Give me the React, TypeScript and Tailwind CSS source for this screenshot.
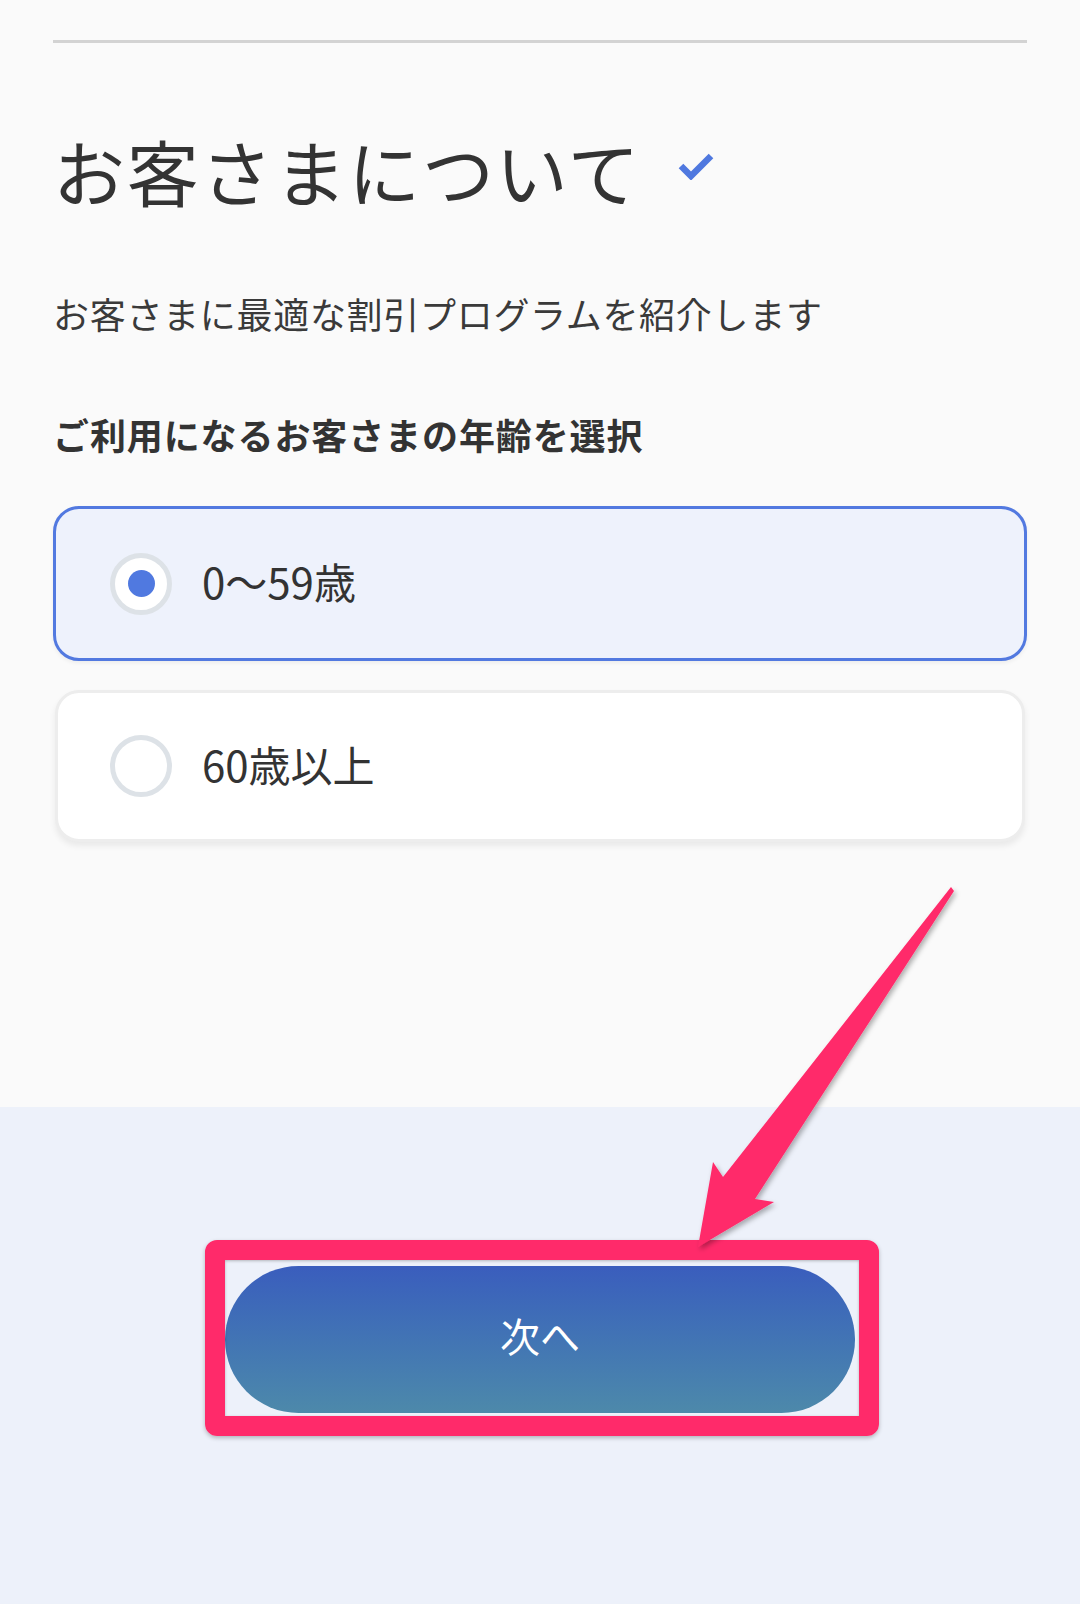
import React from "react";

function Radio({ checked }: { checked: boolean }) {
  return (
    <div className="w-[62px] h-[62px] rounded-full border-[5px] border-[#dde2e7] bg-white flex items-center justify-center shrink-0">
      {checked && <div className="w-[27px] h-[27px] rounded-full bg-[#5079e0]" />}
    </div>
  );
}

export default function App() {
  return (
    <div
      className="relative w-[1080px] h-[1604px] flex flex-col overflow-hidden"
      style={{ fontFamily: '"Noto Sans CJK JP", "Noto Sans", sans-serif' }}
    >
      <div className="h-[1107px] bg-[#fafafa] px-[53px] pt-[40px] flex flex-col">
        <div className="h-[3px] bg-[#d3d3d3]" />
        <div className="mt-[91px] h-[72px] flex items-center">
          <span className="text-[72px] leading-none text-[#333333] tracking-[1.8px]">お客さまについて</span>
          <svg className="ml-[37px] mt-[-8px]" width="36" height="28" viewBox="0 0 36 28">
            <path d="M3 14 L13 24 L33 4" fill="none" stroke="#4f78df" strokeWidth="6.5" strokeLinecap="butt" strokeLinejoin="miter" />
          </svg>
        </div>
        <div className="mt-[80px] h-[54px] flex items-center text-[36px] leading-none text-[#3a3a3a] tracking-[0.7px]">
          お客さまに最適な割引プログラムを紹介します
        </div>
        <div className="mt-[67px] h-[54px] flex items-center text-[36px] leading-none font-bold text-[#333333] tracking-[0.9px]">
          ご利用になるお客さまの年齢を選択
        </div>
        <div className="mt-[45px] h-[155px] rounded-[26px] border-[3.5px] border-[#5279e0] bg-[#eef2fc] flex items-center pl-[54px] gap-[30px] shadow-[0_2px_4px_rgba(0,0,0,0.06)]">
          <Radio checked />
          <span className="text-[42px] leading-none text-[#333333] mt-[-6px]">0〜59歳</span>
        </div>
        <div className="mt-[29px] mx-[2px] h-[152px] rounded-[24px] border-[3px] border-[#ededed] bg-white flex items-center pl-[52px] gap-[30px] shadow-[0_4px_6px_rgba(0,0,0,0.07)]">
          <Radio checked={false} />
          <span className="text-[42px] leading-none text-[#333333] mt-[-4px]">60歳以上</span>
        </div>
      </div>
      <div className="flex-1 bg-[#edf1fa] flex justify-center items-start pt-[159px]">
        <div className="relative">
          <button
            className="w-[630px] h-[147px] rounded-full text-white text-[40px] leading-none flex items-center justify-center bg-gradient-to-b from-[#3a5dbd] to-[#4d89aa]"
          >
            <span className="mt-[-10px]">次へ</span>
          </button>
          <div className="absolute left-[-20px] right-[-24px] top-[-26px] bottom-[-23px] rounded-[12px] border-[20px] border-[#ff2a6a] shadow-[0_2px_4px_rgba(0,0,0,0.25),inset_0_1px_3px_rgba(0,0,0,0.25)] pointer-events-none" />
        </div>
      </div>
      <svg className="absolute left-0 top-0 pointer-events-none" width="1080" height="1604" viewBox="0 0 1080 1604">
        <defs>
          <filter id="sh" x="-20%" y="-20%" width="140%" height="140%">
            <feDropShadow dx="2" dy="3" stdDeviation="2.5" floodColor="#000" floodOpacity="0.3" />
          </filter>
        </defs>
        <polygon
          points="951,887 954,891 755,1199 774,1202 698,1247 713,1162 723,1177"
          fill="#ff2a6a"
          filter="url(#sh)"
        />
      </svg>
    </div>
  );
}
